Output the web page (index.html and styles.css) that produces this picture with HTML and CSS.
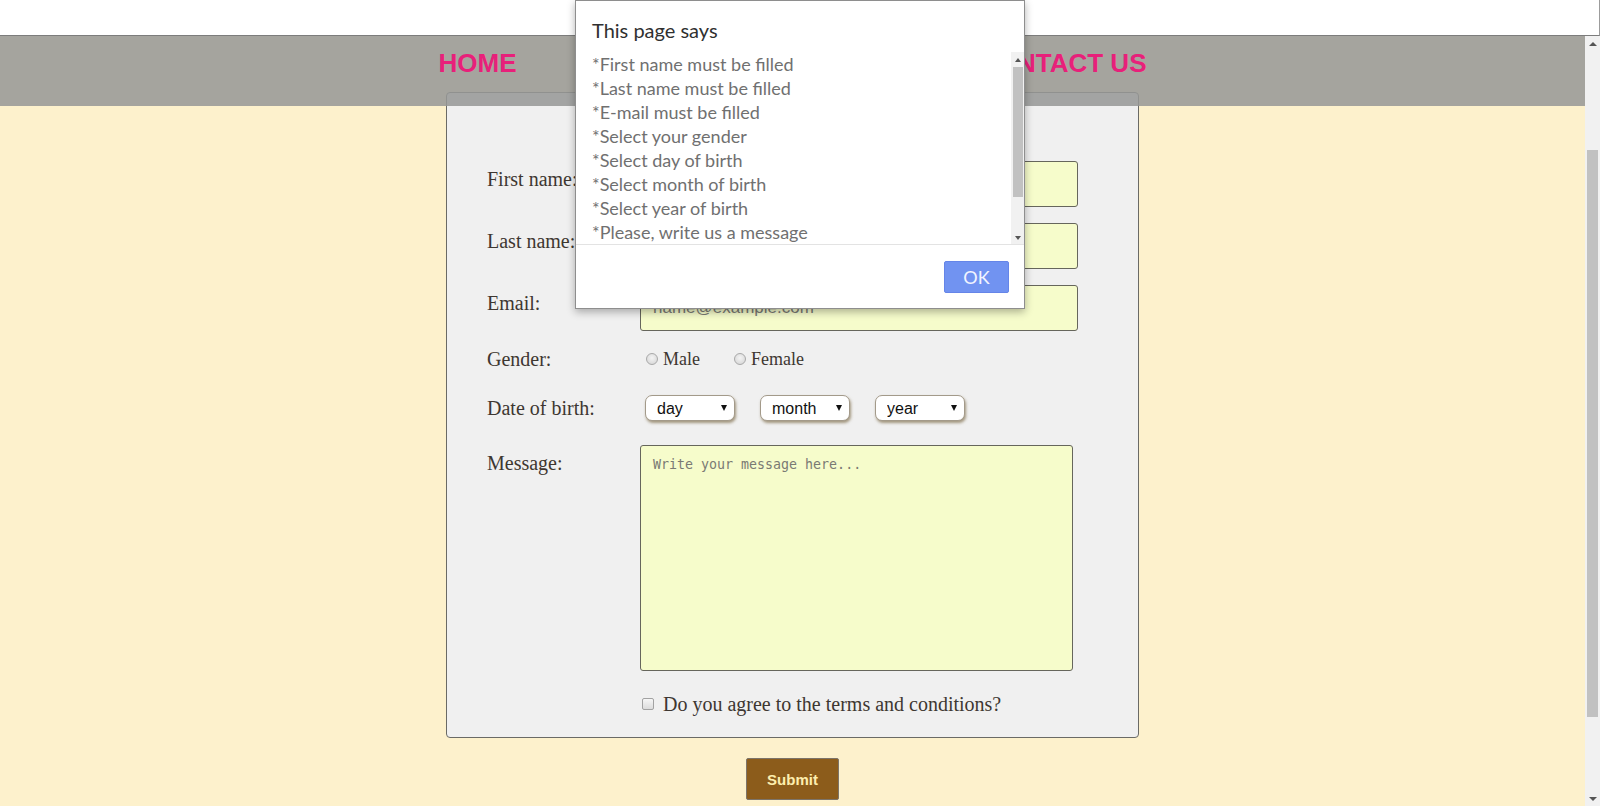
FILE: index.html
```html
<!DOCTYPE html>
<html lang="en">
<head>
<meta charset="utf-8">
<title>Contact</title>
<link rel="stylesheet" href="styles.css">
</head>
<body>
<div class="topbar"></div>
<div class="viewport">
  <div class="page">
    <nav class="nav">
      <div class="nav-inner">
        <a href="#">HOME</a>
        <a href="#">CONTACT US</a>
      </div>
    </nav>
    <main class="content">
      <form class="card">
        <div class="row row-text">
          <label class="lbl lbl-top">First name:</label>
          <input class="field" type="text">
        </div>
        <div class="row row-text">
          <label class="lbl lbl-top">Last name:</label>
          <input class="field" type="text">
        </div>
        <div class="row row-text row-last">
          <label class="lbl lbl-top">Email:</label>
          <input class="field" type="email" placeholder="name@example.com">
        </div>
        <div class="row row-gender">
          <span class="lbl">Gender:</span>
          <div class="radios">
            <label class="opt"><input type="radio" name="g" class="radio">Male</label>
            <label class="opt opt2"><input type="radio" name="g" class="radio">Female</label>
          </div>
        </div>
        <div class="row row-dob">
          <span class="lbl">Date of birth:</span>
          <div class="selects">
            <span class="sel"><select><option>day</option></select></span>
            <span class="sel"><select><option>month</option></select></span>
            <span class="sel"><select><option>year</option></select></span>
          </div>
        </div>
        <div class="row row-msg">
          <label class="lbl lbl-top">Message:</label>
          <textarea class="area" placeholder="Write your message here..."></textarea>
        </div>
        <div class="row row-agree">
          <span></span>
          <label class="agree"><input type="checkbox" class="check">Do you agree to the terms and conditions?</label>
        </div>
      </form>
      <div class="actions">
        <button type="button" class="submit">Submit</button>
      </div>
    </main>
  </div>
  <div class="vscroll">
    <div class="arr arr-up"></div>
    <div class="thumb"></div>
    <div class="spacer"></div>
    <div class="arr arr-down"></div>
  </div>
</div>

<div class="dialog">
  <div class="dtitle">This page says</div>
  <div class="dbody">
    <div class="msgs">
      <div>*First name must be filled</div>
      <div>*Last name must be filled</div>
      <div>*E-mail must be filled</div>
      <div>*Select your gender</div>
      <div>*Select day of birth</div>
      <div>*Select month of birth</div>
      <div>*Select year of birth</div>
      <div>*Please, write us a message</div>
    </div>
    <div class="dscroll">
      <div class="arr arr-up small"></div>
      <div class="dthumb"></div>
      <div class="spacer"></div>
      <div class="arr arr-down small"></div>
    </div>
  </div>
  <div class="dfoot">
    <button type="button" class="ok">OK</button>
  </div>
</div>
</body>
</html>
```

FILE: styles.css
```css
html, body {
  margin: 0;
  padding: 0;
}
body {
  width: 1600px;
  height: 806px;
  overflow: hidden;
  position: relative;
  background: #ffffff;
  font-family: "Liberation Serif", "Times New Roman", serif;
}

.topbar {
  height: 35px;
  background: #ffffff;
  border-bottom: 1px solid #7c7c7c;
  border-right: 1px solid #9c9c9c;
}

.viewport {
  display: grid;
  grid-template-columns: 1fr 15px;
  height: 770px;
}

.page {
  position: relative;
  background: #fdf1cc;
  overflow: hidden;
}

.nav {
  position: absolute;
  top: 0;
  left: 0;
  right: 0;
  height: 70px;
  box-sizing: border-box;
  padding-top: 12px;
  display: flex;
  justify-content: center;
  background: rgba(150, 151, 150, 0.86);
  z-index: 2;
}
.nav-inner {
  width: 708px;
  display: flex;
  justify-content: space-between;
}
.nav a {
  font-family: "Liberation Sans", Arial, sans-serif;
  font-weight: bold;
  font-size: 26px;
  line-height: 30px;
  color: #e8207a;
  text-decoration: none;
}

.content {
  padding-top: 56px;
  display: flex;
  flex-direction: column;
  align-items: center;
}

.card {
  width: 693px;
  box-sizing: border-box;
  border: 1px solid #6a6a66;
  border-radius: 4px;
  background: #f0f0f0;
  padding: 68px 60px 21px 40px;
}

.row {
  display: grid;
  grid-template-columns: 153px 1fr;
}

.lbl {
  font-size: 20px;
  line-height: 23px;
  color: #3e3731;
}
.lbl-top {
  padding-top: 7px;
}

.row-text {
  height: 46px;
  margin-bottom: 16px;
}
.row-last {
  margin-bottom: 0;
}

.field {
  width: 438px;
  height: 46px;
  box-sizing: border-box;
  margin: 0;
  border: 1px solid #66665c;
  border-radius: 3px;
  background: #f6fccb;
  padding: 0 12px;
  font-family: "Liberation Sans", Arial, sans-serif;
  font-size: 17px;
  color: #333;
  outline: none;
}
.field::placeholder {
  color: #7a7a74;
}

.row-gender {
  margin-top: 16px;
  height: 24px;
  align-items: center;
}
.radios {
  display: flex;
  align-items: center;
  padding-left: 6px;
}
.opt {
  display: flex;
  align-items: center;
  gap: 5px;
  font-size: 18px;
  line-height: 24px;
  color: #3e3731;
}
.opt2 {
  margin-left: 34px;
}
.radio {
  appearance: none;
  -webkit-appearance: none;
  margin: 0;
  width: 12px;
  height: 12px;
  border-radius: 50%;
  border: 1px solid #a9a9a9;
  box-sizing: border-box;
  background: radial-gradient(circle at 50% 40%, #f4f4f4 0%, #d2d2d2 100%);
}

.row-dob {
  margin-top: 24px;
  height: 26px;
  align-items: center;
}
.selects {
  display: flex;
  gap: 25px;
  padding-left: 5px;
}
.sel {
  position: relative;
  display: block;
  width: 90px;
  height: 26px;
}
.sel select {
  appearance: none;
  -webkit-appearance: none;
  width: 90px;
  height: 26px;
  margin: 0;
  box-sizing: border-box;
  border: 1px solid #a39a8a;
  border-radius: 7px;
  background: #ffffff;
  box-shadow: 1px 2px 3px rgba(110, 90, 50, 0.6);
  padding: 0 0 0 11px;
  font-family: "Liberation Sans", Arial, sans-serif;
  font-size: 16px;
  color: #111;
  outline: none;
}
.sel::after {
  content: "";
  position: absolute;
  right: 8px;
  top: 10px;
  border-left: 3px solid transparent;
  border-right: 3px solid transparent;
  border-top: 6px solid #111;
  pointer-events: none;
}

.row-msg {
  margin-top: 24px;
  height: 226px;
}
.area {
  width: 433px;
  height: 226px;
  box-sizing: border-box;
  margin: 0;
  border: 1px solid #66665c;
  border-radius: 3px;
  background: #f6fccb;
  padding: 10px 12px;
  font-family: "DejaVu Sans Mono", monospace;
  font-size: 13.3px;
  line-height: 17px;
  resize: none;
  outline: none;
}
.area::placeholder {
  color: #7a7a74;
}

.row-agree {
  margin-top: 21px;
  height: 24px;
  align-items: center;
}
.agree {
  display: flex;
  align-items: center;
  gap: 9px;
  padding-left: 2px;
  font-size: 20px;
  line-height: 24px;
  color: #3e3731;
}
.check {
  appearance: none;
  -webkit-appearance: none;
  margin: 0;
  width: 12px;
  height: 12px;
  box-sizing: border-box;
  border: 1px solid #a2a2a2;
  border-radius: 2px;
  background: linear-gradient(#f6f6f6, #dcdcdc);
}

.actions {
  margin-top: 20px;
  display: flex;
  justify-content: center;
}
.submit {
  width: 93px;
  height: 42px;
  box-sizing: border-box;
  border: 1px solid #7d7468;
  border-radius: 2px;
  background: #8c5c1b;
  color: #fdeeae;
  font-family: "Liberation Sans", Arial, sans-serif;
  font-weight: bold;
  font-size: 15px;
  padding: 0;
}

/* page scrollbar */
.vscroll {
  display: flex;
  flex-direction: column;
  background: #f1f1f1;
}
.arr {
  height: 15px;
  display: flex;
  align-items: center;
  justify-content: center;
  flex: none;
}
.arr::before {
  content: "";
  border-left: 4px solid transparent;
  border-right: 4px solid transparent;
}
.arr-up::before {
  border-bottom: 4px solid #555;
}
.arr-down::before {
  border-top: 4px solid #555;
}
.arr.small {
  height: 13px;
}
.arr.small::before {
  border-left-width: 3.5px;
  border-right-width: 3.5px;
}
.thumb {
  margin: 99px 2px 0 2px;
  height: 567px;
  background: #c1c1c1;
  flex: none;
}
.spacer {
  flex: 1;
}

/* alert dialog */
.dialog {
  position: absolute;
  left: 575px;
  top: 0;
  width: 450px;
  height: 309px;
  box-sizing: border-box;
  background: #ffffff;
  border: 1px solid #8e8e8e;
  box-shadow: 0 3px 8px rgba(0, 0, 0, 0.3);
  font-family: Lato, "Open Sans", sans-serif;
  display: flex;
  flex-direction: column;
  z-index: 5;
}
.dtitle {
  height: 51px;
  box-sizing: border-box;
  padding: 17px 0 0 16px;
  font-size: 20px;
  line-height: 24px;
  color: #303030;
}
.dbody {
  height: 192px;
  display: flex;
  border-bottom: 1px solid #e3e3e3;
}
.msgs {
  flex: 1;
  overflow: hidden;
  padding-left: 16px;
  font-size: 18px;
  line-height: 24px;
  color: #707070;
}
.dscroll {
  width: 13px;
  display: flex;
  flex-direction: column;
  background: #f1f1f1;
}
.arr.small:first-child {
  margin-top: 1px;
}
.dthumb {
  margin: 1px 1px 0 2px;
  height: 130px;
  background: #c1c1c1;
  flex: none;
}
.dfoot {
  flex: 1;
  display: flex;
  justify-content: flex-end;
  align-items: flex-start;
  padding: 16px 15px 0 0;
}
.ok {
  width: 65px;
  height: 32px;
  border: 1px solid #6585e8;
  border-radius: 2px;
  background: #7193f1;
  color: #f2f5ff;
  font-family: Lato, "Open Sans", sans-serif;
  font-size: 18px;
  padding: 0;
}
```
